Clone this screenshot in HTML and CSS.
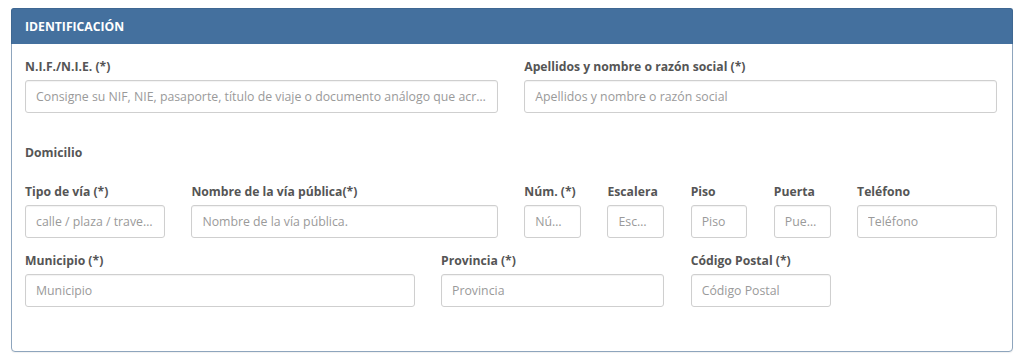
FILE: index.html
```html
<!DOCTYPE html>
<html lang="es">
<head>
<meta charset="utf-8">
<title>Identificación</title>
<link rel="stylesheet" href="styles.css">
</head>
<body>
<div class="panel">
  <div class="panel-heading">IDENTIFICACIÓN</div>
  <div class="panel-body">
    <div class="row row-first">
      <div class="field span-6">
        <label>N.I.F./N.I.E. (*)</label>
        <input type="text" placeholder="Consigne su NIF, NIE, pasaporte, título de viaje o documento análogo que acredite su identidad">
      </div>
      <div class="field span-6">
        <label>Apellidos y nombre o razón social (*)</label>
        <input type="text" placeholder="Apellidos y nombre o razón social">
      </div>
    </div>
    <div class="section-title">Domicilio</div>
    <div class="row">
      <div class="field span-2">
        <label>Tipo de vía (*)</label>
        <input type="text" placeholder="calle / plaza / travesía...">
      </div>
      <div class="field span-4">
        <label>Nombre de la vía pública(*)</label>
        <input type="text" placeholder="Nombre de la vía pública.">
      </div>
      <div class="field span-1">
        <label>Núm. (*)</label>
        <input type="text" placeholder="Número">
      </div>
      <div class="field span-1">
        <label>Escalera</label>
        <input type="text" placeholder="Escalera">
      </div>
      <div class="field span-1">
        <label>Piso</label>
        <input type="text" placeholder="Piso">
      </div>
      <div class="field span-1">
        <label>Puerta</label>
        <input type="text" placeholder="Puerta">
      </div>
      <div class="field span-2">
        <label>Teléfono</label>
        <input type="text" placeholder="Teléfono">
      </div>
    </div>
    <div class="row row-next">
      <div class="field span-5">
        <label>Municipio (*)</label>
        <input type="text" placeholder="Municipio">
      </div>
      <div class="field span-3">
        <label>Provincia (*)</label>
        <input type="text" placeholder="Provincia">
      </div>
      <div class="field span-2">
        <label>Código Postal (*)</label>
        <input type="text" placeholder="Código Postal">
      </div>
    </div>
  </div>
</div>
</body>
</html>
```

FILE: styles.css
```css
html, body {
  margin: 0;
  padding: 0;
  background: #ffffff;
}

body {
  font-family: "Open Sans", "DejaVu Sans", sans-serif;
  padding: 8px 11px;
}

.panel {
  border: 1px solid #8ea5bd;
  border-radius: 4px;
  background: #fff;
  box-shadow: 0 1px 1px rgba(0, 0, 0, 0.06);
}

.panel-heading {
  background: #44709e;
  color: #ffffff;
  font-size: 12.2px;
  font-weight: 700;
  height: 35px;
  line-height: 35px;
  padding: 0 13px;
  border-radius: 3px 3px 0 0;
  margin: -1px -1px 0 -1px;
  border: 1px solid #3e6792;
  border-bottom: none;
}

.panel-body {
  padding: 14px 15px 44px 13px;
}

.row {
  display: grid;
  grid-template-columns: repeat(12, 1fr);
  column-gap: 26.5px;
}

.row-next {
  margin-top: 14px;
}

.span-1 { grid-column: span 1; }
.span-2 { grid-column: span 2; }
.span-3 { grid-column: span 3; }
.span-4 { grid-column: span 4; }
.span-5 { grid-column: span 5; }
.span-6 { grid-column: span 6; }

.field {
  display: flex;
  flex-direction: column;
  min-width: 0;
}

.field label,
.section-title {
  font-size: 12.2px;
  font-weight: 700;
  color: #555555;
  line-height: 17px;
  white-space: nowrap;
}

.field label {
  margin-bottom: 5px;
}

.section-title {
  margin-top: 31px;
  margin-bottom: 22px;
}

.field input {
  box-sizing: border-box;
  width: 100%;
  height: 33px;
  padding: 0 10px;
  font-family: "Open Sans", "DejaVu Sans", sans-serif;
  font-size: 12.3px;
  color: #555;
  border: 1px solid #cfcfcf;
  border-radius: 3px;
  box-shadow: inset 0 1px 1px rgba(0, 0, 0, 0.05);
  background: #fff;
  text-overflow: ellipsis;
  outline: none;
}

.field input::placeholder {
  color: #9a9a9a;
  opacity: 1;
}
```
